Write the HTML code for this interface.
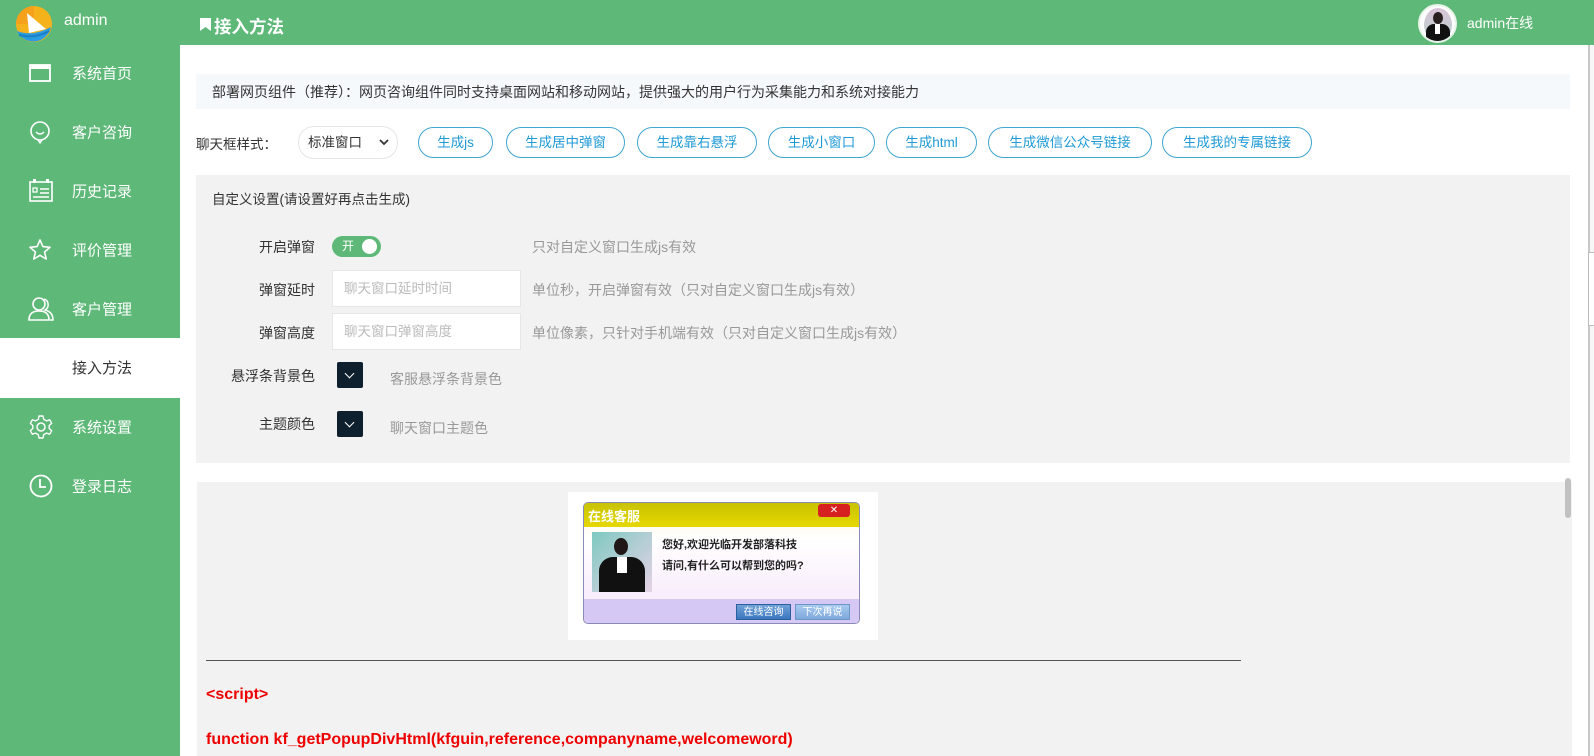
<!DOCTYPE html>
<html><head><meta charset="utf-8"><style>
*{margin:0;padding:0;box-sizing:border-box}
body{width:1594px;height:756px;overflow:hidden;background:#f7f7f7;font-family:"Liberation Sans","Noto Sans CJK SC",sans-serif;position:relative;color:#333}
.a{position:absolute}
#hdr{left:0;top:0;width:1594px;height:45px;background:#5eb878}
#side{left:0;top:0;width:180px;height:756px;background:#5eb878}
.nav{position:absolute;left:0;width:180px;height:59px;color:#fff;font-size:15px}
.nav span{position:absolute;left:72px;top:50%;transform:translateY(-50%)}
.nav svg{position:absolute;left:28px;top:50%;transform:translateY(-50%)}
.btn{position:absolute;top:127px;height:31px;border:1px solid #3fa6cf;border-radius:16px;color:#1f9ad6;font-size:13.5px;text-align:center;line-height:29px;background:#fff}
.lbl{position:absolute;font-size:14px;color:#333;text-align:right;width:140px;left:175px}
.hint{position:absolute;font-size:14px;color:#999}
.inp{position:absolute;left:332px;width:189px;height:37px;background:#fff;border:1px solid #e6e6e6;font-size:13.5px;color:#bbb;padding-left:11px;line-height:35px}
.sw{position:absolute;left:337px;width:26px;height:26px;background:#0e1f2d;border-radius:2px}
.sw:after{content:"";position:absolute;left:9px;top:8px;width:6px;height:6px;border-right:1.5px solid #fff;border-bottom:1.5px solid #fff;transform:rotate(45deg)}
.code{position:absolute;left:206px;color:#e00;font-weight:bold;font-size:16px}
</style></head><body>
<div class="a" id="hdr"></div>
<div class="a" id="side"></div>
<svg class="a" style="left:15px;top:5px" width="38" height="38" viewBox="0 0 38 38">
<circle cx="19" cy="19" r="18" fill="#f6b21a"/>
<path d="M1 19A18 18 0 0 1 19 1L19 19Z" fill="#f5a11b"/>
<path d="M2 26Q18 32 36 22A18 18 0 0 1 2 26Z" fill="#2a9de0"/>
<path d="M4 30Q20 34 34 26" stroke="#1d7fc7" stroke-width="2" fill="none"/>
<path d="M12 8L31 24L14 28Z" fill="#fff"/>
</svg>
<div class="a" style="left:64px;top:12px;color:#fff;font-size:16px">admin</div>
<svg class="a" style="left:200px;top:18px" width="11" height="13" viewBox="0 0 11 13"><path d="M0 0H11V13L5.5 9L0 13Z" fill="#fff"/></svg>
<div class="a" style="left:214px;top:14px;color:#fff;font-size:17.5px;font-weight:bold">接入方法</div>
<div class="a" style="left:1418px;top:4px;width:39px;height:39px;border-radius:50%;background:#fff;overflow:hidden;border:2px solid #e8f4ea">
<div class="a" style="left:4px;top:2px;width:28px;height:34px;border-radius:50%;background:linear-gradient(#d9c3d6,#b9d3cf)"></div>
<div class="a" style="left:13px;top:6px;width:10px;height:12px;border-radius:50%;background:#2a2020"></div>
<div class="a" style="left:6px;top:18px;width:24px;height:18px;border-radius:8px 8px 0 0;background:#111"></div>
<div class="a" style="left:15px;top:18px;width:5px;height:10px;background:#fff"></div>
</div>
<div class="a" style="left:1467px;top:13px;color:#fff;font-size:14px">admin在线</div>
<div class="nav" style="top:43px"><svg width="24" height="20" viewBox="0 0 24 20"><rect x="2" y="2" width="20" height="16" fill="none" stroke="#fff" stroke-width="1.8"/><rect x="2" y="2" width="20" height="4" fill="#fff"/></svg><span>系统首页</span></div>
<div class="nav" style="top:102px"><svg width="24" height="24" viewBox="0 0 24 24"><circle cx="12" cy="11" r="9" fill="none" stroke="#fff" stroke-width="1.6"/><path d="M8 12Q12 16 16 12" stroke="#fff" stroke-width="1.5" fill="none"/><path d="M10 20L12 23L14 20" stroke="#fff" stroke-width="1.4" fill="none"/></svg><span>客户咨询</span></div>
<div class="nav" style="top:161px"><svg width="26" height="24" viewBox="0 0 26 24"><rect x="2" y="3" width="22" height="19" fill="none" stroke="#fff" stroke-width="1.6"/><rect x="5" y="0" width="3" height="4" fill="#fff"/><rect x="18" y="0" width="3" height="4" fill="#fff"/><rect x="5" y="9" width="4" height="4" fill="none" stroke="#fff" stroke-width="1.3"/><path d="M12 10H21M12 14H21M5 18H21" stroke="#fff" stroke-width="1.4"/></svg><span>历史记录</span></div>
<div class="nav" style="top:220px"><svg width="24" height="24" viewBox="0 0 24 24"><path d="M12 2L14.9 8.6L22 9.3L16.6 14L18.2 21L12 17.3L5.8 21L7.4 14L2 9.3L9.1 8.6Z" fill="none" stroke="#fff" stroke-width="1.6" stroke-linejoin="round"/></svg><span>评价管理</span></div>
<div class="nav" style="top:279px"><svg width="26" height="26" viewBox="0 0 26 26"><circle cx="11" cy="8" r="6" fill="none" stroke="#fff" stroke-width="1.6"/><path d="M1 24Q1 15 11 15Q21 15 21 24Z" fill="none" stroke="#fff" stroke-width="1.6"/><path d="M16 3A6 6 0 0 1 17 14Q25 16 25 24H22" fill="none" stroke="#fff" stroke-width="1.5"/></svg><span>客户管理</span></div>
<div class="a" style="left:0;top:338px;width:180px;height:60px;background:#fff"></div>
<div class="a" style="left:72px;top:357px;font-size:15px;color:#333">接入方法</div>
<div class="nav" style="top:397px"><svg width="26" height="26" viewBox="0 0 26 26"><circle cx="13" cy="13" r="4" fill="none" stroke="#fff" stroke-width="1.5"/><path d="M11 2H15L15.7 5.3L18.5 6.9L21.7 5.8L23.7 9.3L21.2 11.5V14.5L23.7 16.7L21.7 20.2L18.5 19.1L15.7 20.7L15 24H11L10.3 20.7L7.5 19.1L4.3 20.2L2.3 16.7L4.8 14.5V11.5L2.3 9.3L4.3 5.8L7.5 6.9L10.3 5.3Z" fill="none" stroke="#fff" stroke-width="1.4" stroke-linejoin="round"/></svg><span>系统设置</span></div>
<div class="nav" style="top:456px"><svg width="26" height="26" viewBox="0 0 26 26"><circle cx="13" cy="13" r="10.5" fill="none" stroke="#fff" stroke-width="1.8"/><path d="M12 6V14H18" fill="none" stroke="#fff" stroke-width="1.8"/></svg><span>登录日志</span></div>
<div class="a" style="left:180px;top:45px;width:1408px;height:711px;background:#fff"></div>
<div class="a" style="left:1588px;top:45px;width:2px;height:711px;background:#c8c8c8"></div>
<div class="a" style="left:1588px;top:252px;width:6px;height:74px;background:#fff;border:1px solid #bbb;border-right:none"></div>
<div class="a" style="left:196px;top:74px;width:1374px;height:35px;background:#f6f9fc"></div>
<div class="a" style="left:212px;top:82px;font-size:14px">部署网页组件（推荐）：网页咨询组件同时支持桌面网站和移动网站，提供强大的用户行为采集能力和系统对接能力</div>
<div class="a" style="left:196px;top:133px;font-size:13.5px">聊天框样式：</div>
<div class="a" style="left:298px;top:126px;width:100px;height:33px;border:1px solid #e6e6e6;border-radius:16px;font-size:13.5px;line-height:31px;padding-left:9px">标准窗口<svg style="position:absolute;right:8px;top:12px" width="10" height="7" viewBox="0 0 10 7"><path d="M1 1L5 5L9 1" stroke="#333" stroke-width="1.8" fill="none"/></svg></div>
<div class="btn" style="left:418px;width:75px">生成js</div>
<div class="btn" style="left:506px;width:119px">生成居中弹窗</div>
<div class="btn" style="left:637px;width:120px">生成靠右悬浮</div>
<div class="btn" style="left:768px;width:107px">生成小窗口</div>
<div class="btn" style="left:886px;width:91px">生成html</div>
<div class="btn" style="left:988px;width:164px">生成微信公众号链接</div>
<div class="btn" style="left:1162px;width:150px">生成我的专属链接</div>
<div class="a" style="left:196px;top:175px;width:1374px;height:288px;background:#f2f2f2"></div>
<div class="a" style="left:212px;top:188px;font-size:13.5px">自定义设置(请设置好再点击生成)</div>
<div class="lbl" style="top:237px">开启弹窗</div>
<div class="a" style="left:332px;top:236px;width:49px;height:21px;border-radius:11px;background:#5eb878;color:#fff;font-size:12px;line-height:21px;padding-left:10px">开<div class="a" style="left:30px;top:3px;width:15px;height:15px;border-radius:50%;background:#fff"></div></div>
<div class="hint" style="left:532px;top:237px">只对自定义窗口生成js有效</div>
<div class="lbl" style="top:280px">弹窗延时</div>
<div class="inp" style="top:270px">聊天窗口延时时间</div>
<div class="hint" style="left:532px;top:280px">单位秒，开启弹窗有效（只对自定义窗口生成js有效）</div>
<div class="lbl" style="top:323px">弹窗高度</div>
<div class="inp" style="top:313px">聊天窗口弹窗高度</div>
<div class="hint" style="left:532px;top:323px">单位像素，只针对手机端有效（只对自定义窗口生成js有效）</div>
<div class="lbl" style="top:366px">悬浮条背景色</div>
<div class="sw" style="top:362px"></div>
<div class="hint" style="left:390px;top:369px">客服悬浮条背景色</div>
<div class="lbl" style="top:414px">主题颜色</div>
<div class="sw" style="top:411px"></div>
<div class="hint" style="left:390px;top:418px">聊天窗口主题色</div>
<div class="a" style="left:197px;top:482px;width:1375px;height:274px;background:#f2f2f2"></div>
<div class="a" style="left:1565px;top:478px;width:6px;height:40px;border-radius:3px;background:#c1c1c1"></div>
<div class="a" style="left:568px;top:492px;width:310px;height:148px;background:#fff"></div>
<div class="a" style="left:583px;top:502px;width:277px;height:122px;border:1px solid #8a8ab8;border-radius:5px;overflow:hidden;background:linear-gradient(#fff7d8 0%,#fff 30%,#f9eefc 75%)">
 <div class="a" style="left:0;top:0;width:277px;height:24px;background:linear-gradient(#c8c200,#e6d800)"></div>
 <div class="a" style="left:4px;top:3px;color:#fff;font-weight:bold;font-size:13px">在线客服</div>
 <div class="a" style="left:234px;top:1px;width:32px;height:13px;background:#d72020;border-radius:3px;color:#fff;font-size:10px;text-align:center;line-height:13px">✕</div>
 <div class="a" style="left:8px;top:29px;width:60px;height:60px;background:linear-gradient(135deg,#7fc9c1,#e6d2e6)"></div>
 <div class="a" style="left:30px;top:35px;width:14px;height:17px;border-radius:50%;background:#201818"></div>
 <div class="a" style="left:15px;top:54px;width:46px;height:35px;border-radius:14px 14px 0 0;background:#111"></div>
 <div class="a" style="left:33px;top:54px;width:10px;height:16px;background:#fff"></div>
 <div class="a" style="left:78px;top:32px;font-size:11px;font-weight:bold;color:#222;line-height:21px">您好,欢迎光临开发部落科技<br>请问,有什么可以帮到您的吗?</div>
 <div class="a" style="left:0;top:96px;width:277px;height:26px;background:#d6c8f4"></div>
 <div class="a" style="left:152px;top:101px;width:55px;height:16px;background:linear-gradient(#6fa1d6,#3b76bf);color:#fff;font-size:10px;text-align:center;line-height:16px;border:1px solid #2b5f9f">在线咨询</div>
 <div class="a" style="left:211px;top:101px;width:55px;height:16px;background:linear-gradient(#a7c9ee,#7ea9dd);color:#fff;font-size:10px;text-align:center;line-height:16px;border:1px solid #6c95c8">下次再说</div>
</div>
<div class="a" style="left:206px;top:660px;width:1035px;height:1px;background:#555"></div>
<div class="code" style="top:686px">&lt;script&gt;</div>
<div class="code" style="top:731px">function kf_getPopupDivHtml(kfguin,reference,companyname,welcomeword)</div>
</body></html>
